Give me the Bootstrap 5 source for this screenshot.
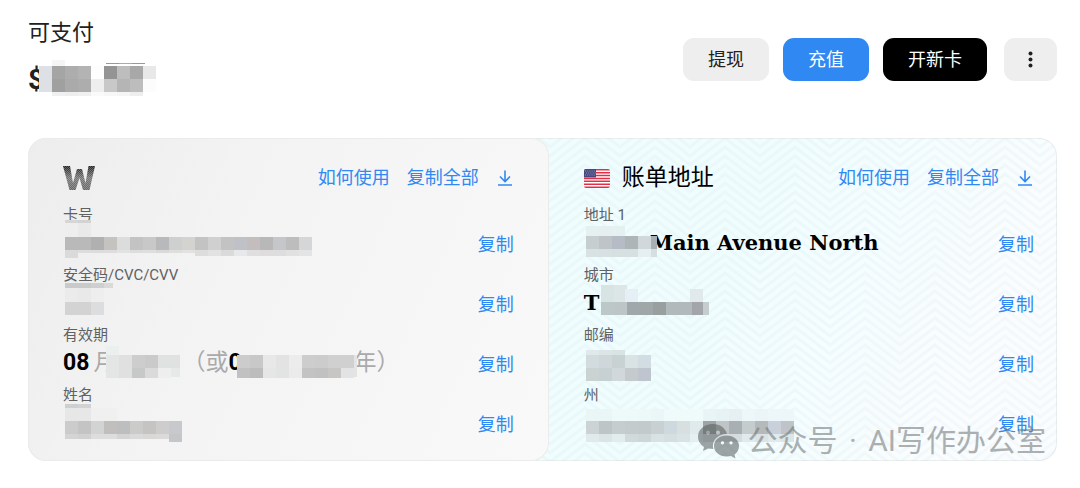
<!DOCTYPE html>
<html lang="zh-CN">
<head>
<meta charset="utf-8">
<meta name="viewport" content="width=device-width, initial-scale=1">
<title>可支付</title>
<link href="https://cdn.jsdelivr.net/npm/bootstrap@5.3.0/dist/css/bootstrap.min.css" rel="stylesheet">
<style>
body { font-family: Roboto, "Noto Sans CJK SC", sans-serif; color: #212121; background: #fff; }
.page { padding: 16px 23px 16px 28px; }
.balance-title { font-size: 22px; line-height: 34px; }
.balance-sum { font-size: 28px; line-height: 60px; font-weight: 700; }
.actions { gap: 14px; padding-top: 22px; }
.act { height: 43px; padding: 0 25px; border: 0; border-radius: 11px; font-size: 18px; line-height: 24px; }
.act-soft, .act-soft:hover { background: #eee; color: #212121; }
.act-main, .act-main:hover { background: #3089f2; color: #fff; }
.act-dark, .act-dark:hover { background: #000; color: #fff; }
.act-more { padding: 0 17px; margin-left: 3px; }
.panels { display: grid; grid-template-columns: 50.6% 1fr; margin-top: 28px; border-radius: 18px; overflow: hidden; background: linear-gradient(115deg, #effdff 45%, #f0fdff 65%, #fafdff 90%); box-shadow: inset 0 0 0 1px #e9eeef; }
.chevrons { position: absolute; inset: 0; width: 100%; height: 100%; }
.panel { padding: 23px 35px 16px; min-width: 0; }
.panel-card { border-radius: 18px; background: linear-gradient(115deg, #ededed, #f3f3f3 35%, #f9f9f9); box-shadow: inset 0 0 0 1px #eaecec; }
.panel-address { padding-right: 23px; }
.panel-head { height: 34px; margin-bottom: 10px; gap: 17px; }
.panel-title { font-size: 23px; line-height: 34px; color: #000; font-weight: 400; }
.act-link { font-size: 18px; line-height: 24px; color: #3089f2; text-decoration: none; background: none; border: 0; padding: 0; white-space: nowrap; }
.field-label { font-size: 15px; line-height: 20px; color: #5f6163; }
.field-row { height: 40px; }
.field-value { font-size: 23px; line-height: 34px; color: #aaa; padding-bottom: 5px; white-space: pre; }
.field-value b { color: #000; }
.street { font-family: "Roboto Slab", "DejaVu Serif", serif; font-size: 21px; }
.gap-number { width: 66px; }
.gap-year { width: 112px; }
.mosaic { position: absolute; left: 0; top: 0; width: 100%; height: 60px; overflow: visible; pointer-events: none; }
.watermark { position: absolute; right: 34px; bottom: 16px; gap: 8px; font-size: 30px; line-height: 40px; color: #6e7272; opacity: .55; pointer-events: none; }
</style>
</head>
<body>
<main class="page position-relative">
  <header class="d-flex justify-content-between align-items-start">
    <div class="position-relative">
      <div class="balance-title">可支付</div>
      <div class="balance-sum">$</div>
      <svg class="mosaic" aria-hidden="true" data-cells="24,44,6,f5f5f5|11,50,26,dde0e4|24,50,13,a5a5a5,adadad,b3b3b3,fdfdfd,949494,bdbdbd,a8a8a8,e8e8e8|24,63,13,a0a0a0,aaaaaa,adadad,eeeeee,c8c8c8,b5b5b5,bdbdbd,fcfcfc|24,76,4,f0f0f0,eeeeee,f0f0f0,fafafa,f7f7f7,f5f5f5,eeeeee|78,47,1,999999|91,47,1,aaaaaa,999999"></svg>
    </div>
    <div class="actions d-flex">
      <button class="btn act act-soft">提现</button>
      <button class="btn act act-main">充值</button>
      <button class="btn act act-dark">开新卡</button>
      <button class="btn act act-soft act-more d-flex align-items-center" aria-label="更多"><svg width="19" height="19" viewBox="0 0 19 19" fill="#212121"><circle cx="9.500" cy="3.500" r="2"/><circle cx="9.500" cy="9.500" r="2"/><circle cx="9.500" cy="15.500" r="2"/></svg></button>
    </div>
  </header>

  <div class="panels position-relative">
    <svg class="chevrons" aria-hidden="true"><defs><pattern id="zig" x="-3" width="70" height="9" patternUnits="userSpaceOnUse"><path d="M-35 -9L0 -36L35 -9L70 -36L105 -9M-35 0L0 -27L35 0L70 -27L105 0M-35 9L0 -18L35 9L70 -18L105 9M-35 18L0 -9L35 18L70 -9L105 18M-35 27L0 0L35 27L70 0L105 27M-35 36L0 9L35 36L70 9L105 36" fill="none" stroke="#60757c" stroke-opacity=".035" stroke-width="3"/></pattern></defs><rect width="100%" height="100%" fill="url(#zig)"/></svg>

    <section class="panel panel-card position-relative">
      <div class="panel-head d-flex align-items-center">
        <svg class="me-auto" width="33" height="26" viewBox="0 0 33 26" role="img" aria-label="W"><defs><linearGradient id="wg" x2="0" y2="1"><stop stop-color="#222"/><stop offset=".5" stop-color="#777"/><stop offset="1" stop-color="#666"/></linearGradient><pattern id="dots" width="2" height="2" patternUnits="userSpaceOnUse"><path d="M0 0h1v1h-1zM1 1h1v1h-1z" fill="#fff" fill-opacity=".25"/></pattern></defs><path d="M0 1H7L10 18L14 4H19L22.500 18L25.500 1H32L26.500 25H20L16.500 13L12.500 25H6.500Z" fill="url(#wg)"/><path d="M0 1H7L10 18L14 4H19L22.500 18L25.500 1H32L26.500 25H20L16.500 13L12.500 25H6.500Z" fill="url(#dots)"/></svg>
        <a class="act-link" href="#">如何使用</a>
        <button class="act-link">复制全部</button>
        <button class="act-link d-flex" aria-label="下载"><svg width="18" height="18" viewBox="0 0 18 18" fill="none" stroke="#3089f2" stroke-width="1.600"><path d="M9 1.500V12M4 7.500L9 12.500L14 7.500M2 16H16"/></svg></button>
      </div>
      <div class="position-relative">
        <div class="field-label">卡号</div>
        <div class="field-row d-flex align-items-center justify-content-between"><div class="field-value"></div><button class="act-link">复制</button></div>
        <svg class="mosaic" aria-hidden="true" data-cells="2,15,3,d6d6d6,d3d3d3|2,18,14,eeeeee,e9e9e9|2,32,13,b9b9b9,b9b9b9,b0b0b0,c5c3c0,dcdcdc,c3c3c3,c8c8c8,b7b9bb,cdd0cf,d3d3cf,c3c3c3,d0d0d0,c3c3c3,bfc1c6,c3bdbd,b8b8b8,c4c6ca,bdbdbd,d5d6d8|2,45,8,dadada|15,45,3,dddddd,dcdcdc,dddddd,e2e2e2,dddddd,dedede,d9d9d9,dedede,e2e2e2|132,45,6,dddddd,e2e2e2,dadada,e6e8ea,dfdfdf,dedddb,dddddd,e1e1e1,e4e4e4"></svg>
      </div>
      <div class="position-relative">
        <div class="field-label">安全码/CVC/CVV</div>
        <div class="field-row d-flex align-items-center justify-content-between"><div class="field-value"></div><button class="act-link">复制</button></div>
        <svg class="mosaic" aria-hidden="true" data-cells="2,18,5,c9caca,c9caca,cecfcf|41,18,5,d9d9d9/9|2,23,14,ebebeb,e9e9e9,eeeeee|2,37,13,d3d3d3,d3d3d3,dbdddf"></svg>
      </div>
      <div class="position-relative">
        <div class="field-label">有效期</div>
        <div class="field-row d-flex align-items-center justify-content-between"><div class="field-value d-flex"><b>08</b> <span class="ps-1">月</span><i class="gap-number"></i><span>（或</span><b>0</b><i class="gap-year"></i><span>年）</span></div><button class="act-link">复制</button></div>
        <svg class="mosaic" aria-hidden="true" data-cells="43,21,10,ebefed|43,30,23,e4e6e5,e0e0e0|69,30,13,cdcdcd,cacaca,e0e2e2|108,30,13,e0e2e2/9|69,43,10,c7c9c9,dadada,eeeeee|108,43,9,e5e9e8/9|174,30,13,cccccc,c8c8c8,e8e8e8,e2e4e4,ececec,cdcdcd,cccccc,d0d0d0,d0d0d0|291,30,22,e2e5e4/3|174,43,10,c1c1c1,bcbcbc,e6e6e6,e2e3e3,ebebeb,c3c3c3,c1c1c1,c7c6c4,e3e3e3"></svg>
      </div>
      <div class="position-relative">
        <div class="field-label">姓名</div>
        <div class="field-row d-flex align-items-center justify-content-between"><div class="field-value"></div><button class="act-link">复制</button></div>
        <svg class="mosaic" aria-hidden="true" data-cells="2,19,4,cdd0d2,d2d2d2|2,23,13,e7e7e7,e7e7e7,f0f0f0,f0f0f0|2,36,13,cbcbcb,c4c4c4,d2d4d3,c1bfbd,bcbfbd,cbcbc9,c5c4c2,cecdce,c7c9cc|2,49,5,d4d4d4,d1d1d1,dddddd,dddddd,d4d4d4,dadada,d9d8d6,dadada,c4c6c8|106,54,3,c5c6c7"></svg>
      </div>
    </section>

    <section class="panel panel-address position-relative">
      <div class="panel-head d-flex align-items-center">
        <div class="me-auto d-flex align-items-center">
          <svg class="me-2" width="30" height="19" viewBox="0 0 30 19" role="img" aria-label="US"><defs><clipPath id="fc"><rect width="26" height="19" rx="2"/></clipPath></defs><g clip-path="url(#fc)"><rect width="26" height="19" fill="#fff"/><path d="M0 .75H26M0 3.650H26M0 6.550H26M0 9.450H26M0 12.350H26M0 15.250H26M0 18.250H26" stroke="#df3048" stroke-width="1.500"/><rect width="12" height="8.500" fill="#45487f"/><path d="M1 2H12M2 4H12M1 6H12" stroke="#aaaacb" stroke-width=".8" stroke-dasharray="1 1.200"/></g></svg>
          <h1 class="panel-title m-0">账单地址</h1>
        </div>
        <a class="act-link" href="#">如何使用</a>
        <button class="act-link">复制全部</button>
        <button class="act-link d-flex" aria-label="下载"><svg width="18" height="18" viewBox="0 0 18 18" fill="none" stroke="#3089f2" stroke-width="1.600"><path d="M9 1.500V12M4 7.500L9 12.500L14 7.500M2 16H16"/></svg></button>
      </div>
      <div class="position-relative">
        <div class="field-label">地址 1</div>
        <div class="field-row d-flex align-items-center justify-content-between"><div class="field-value street d-flex"><i class="gap-number"></i><b>Main Avenue North</b></div><button class="act-link">复制</button></div>
        <svg class="mosaic" aria-hidden="true" data-cells="2,21,10,e5f0f1,e5eff0,e5f0f1|2,31,13,c7cecf,bec4c7,b5bcc5,adb5b6,d0d8dc|67,31,13,a9afb2/6|2,44,8,d8e2e2,d8e1e2,d6e0e0,d6e0e1,e5eff2|67,44,8,d5dfe0/6"></svg>
      </div>
      <div class="position-relative">
        <div class="field-label">城市</div>
        <div class="field-row d-flex align-items-center justify-content-between"><div class="field-value street"><b>T</b></div><button class="act-link">复制</button></div>
        <svg class="mosaic" aria-hidden="true" data-cells="17,20,17,d8e3e3,dde6e7|41,24,13,e5eff5|106,24,13,e0eaed|17,37,13,bcc7c7,bec5c7,a0a8ab,a0a7a8,999f9f,b1b9bb,b2b9bc,a2a6ab|119,37,13,c5cdcf/6"></svg>
      </div>
      <div class="position-relative">
        <div class="field-label">邮编</div>
        <div class="field-row d-flex align-items-center justify-content-between"><div class="field-value"></div><button class="act-link">复制</button></div>
        <svg class="mosaic" aria-hidden="true" data-cells="2,25,5,dfe9e9,dce5e6,d8e3e3|2,30,13,d2dcde,cfd7da,c8d2d3,dae3e4,d1dce3|2,43,13,cbd3d2,c7d0d2,d0d8db,c5cbcd,bec5ce"></svg>
      </div>
      <div class="position-relative">
        <div class="field-label">州</div>
        <div class="field-row d-flex align-items-center justify-content-between"><div class="field-value"></div><button class="act-link">复制</button></div>
        <svg class="mosaic" aria-hidden="true" data-cells="2,24,12,eaf5f6,eaf5f6,eef9fa,eef9fa,edf8f9,ebf6f8,effafa,effafa,effafa,e9f4f6,e7f2f4,e6f0f3,edf7f9,ebf5f7,edf7f9,edf7f9|2,36,13,cbd3d4,bec5c7,c5cdce,c4cbcd,c3cacc,c8d0d1,ced9df,d7dfe1,e0e9eb,9da4a5,bfc4c6,a9b0b4,c5cccd,b4b9ba,c9d0d9,bec4c7|2,49,8,e0eaeb,dbe5e6,e1ecec,d0dadb,cdd7d8,d8e1e3,d5dfe2,d9e2e4,e4eff0,dbe3e5,d8e0e2,d4dcdf,e0e9eb,dbe3e5,e0eaed,dbe4e6"></svg>
      </div>
    </section>
  </div>

  <div class="watermark d-flex align-items-center">
    <svg width="42" height="36" viewBox="0 0 42 36" aria-hidden="true"><path fill="#565c5c" fill-rule="evenodd" d="M15 1C6.500 1 0 6.500 0 13.500C0 18 2.500 21.500 6 24L5 28L10 25.500L15.500 26C13 18 20 11 29 11C27.500 5 22 1 15 1ZM10 7.500a2 2 0 1 1 0 4a2 2 0 1 1 0-4ZM20 7.500a2 2 0 1 1 0 4a2 2 0 1 1 0-4Z"/><path fill="#565c5c" fill-rule="evenodd" d="M28.500 12.500C21.500 12.500 16 17 16 23C16 29 21.500 33.500 28.500 33.500L33 33L37.500 35.500L36.500 31.500C39.500 29.500 41 26.500 41 23C41 17 35.500 12.500 28.500 12.500ZM24.500 18a1.700 1.700 0 1 1 0 3.400a1.700 1.700 0 1 1 0-3.400ZM33 18a1.700 1.700 0 1 1 0 3.400a1.700 1.700 0 1 1 0-3.400Z"/></svg>
    <span>公众号<span class="mx-1"> · </span>AI写作办公室</span>
  </div>
</main>
<script src="https://cdn.jsdelivr.net/npm/bootstrap@5.3.0/dist/js/bootstrap.bundle.min.js"></script>
<script>
// Each strip is "x,y,height,colour,colour..."; a colour may carry its own width after a slash.
document.querySelectorAll('.mosaic').forEach(svg => {
  svg.dataset.cells.split('|').forEach(strip => {
    const [x, y, h, ...cells] = strip.split(',');
    cells.forEach((cell, i) => {
      const [colour, width] = cell.split('/');
      const r = document.createElementNS('http://www.w3.org/2000/svg', 'rect');
      r.setAttribute('x', +x + i * 13);
      r.setAttribute('y', y);
      r.setAttribute('width', width || 13);
      r.setAttribute('height', h);
      r.setAttribute('fill', '#' + colour);
      svg.append(r);
    });
  });
});
</script>
</body>
</html>
